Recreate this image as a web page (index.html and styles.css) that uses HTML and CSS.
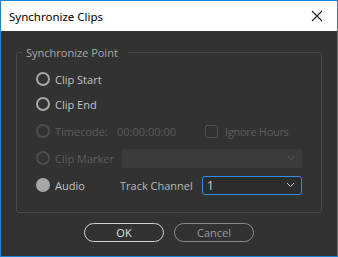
FILE: index.html
```html
<!DOCTYPE html>
<html>
<head>
  <meta charset="utf-8">
  <title>Synchronize Clips</title>
  <link rel="stylesheet" href="styles.css">
</head>
<body>
  <div class="window">
    <div class="titlebar">
      <span class="title">Synchronize Clips</span>
      <svg class="close" width="12" height="12" viewBox="0 0 12 12">
        <path d="M1 1L11 11M11 1L1 11" stroke="#222" stroke-width="1.1"/>
      </svg>
    </div>

    <div class="content">
      <fieldset class="group">
        <legend>Synchronize Point</legend>

        <div class="row">
          <label class="radio"><span class="dot"></span>Clip Start</label>
        </div>
        <div class="row second">
          <label class="radio"><span class="dot"></span>Clip End</label>
        </div>
        <div class="row disabled">
          <label class="radio"><span class="dot"></span>Timecode:</label>
          <span class="timecode">00:00:00:00</span>
          <label class="check"><span class="box"></span>Ignore Hours</label>
        </div>
        <div class="row disabled">
          <label class="radio"><span class="dot"></span>Clip Marker</label>
          <div class="select marker">
            <span></span>
            <svg width="9" height="6" viewBox="0 0 9 6"><path d="M1 1L4.5 4.5L8 1" fill="none" stroke="#555" stroke-width="1"/></svg>
          </div>
        </div>
        <div class="row audio">
          <label class="radio checked"><span class="dot"></span>Audio</label>
          <span class="track-label">Track Channel</span>
          <div class="select track">
            <span>1</span>
            <svg width="9" height="6" viewBox="0 0 9 6"><path d="M1 1L4.5 4.5L8 1" fill="none" stroke="#c8c8c8" stroke-width="1"/></svg>
          </div>
        </div>
      </fieldset>

      <div class="buttons">
        <button class="btn ok">OK</button>
        <button class="btn cancel">Cancel</button>
      </div>
    </div>
  </div>
</body>
</html>
```

FILE: styles.css
```css
html, body {
  margin: 0;
  padding: 0;
}

body {
  width: 338px;
  height: 257px;
  font-family: "Open Sans", "Noto Sans", sans-serif;
  overflow: hidden;
}

.window {
  width: 338px;
  height: 257px;
  box-sizing: border-box;
  border: 1px solid #1883d7;
  background: #323232;
  display: flex;
  flex-direction: column;
}

.titlebar {
  height: 30px;
  background: #fff;
  display: flex;
  align-items: center;
  justify-content: space-between;
  padding: 0 14px 0 8px;
}

.title {
  font-family: "Noto Sans", sans-serif;
  font-size: 11.5px;
  color: #000;
}

.close {
  display: block;
}

.content {
  flex: 1;
  padding: 0 15px;
}

.group {
  margin: 14px 0 0 0;
  padding: 7px 0 0 19px;
  height: 168px;
  box-sizing: border-box;
  border: 1px solid #4a4a4a;
  border-radius: 3px;
}

legend {
  font-size: 11px;
  color: #a8a8a8;
  padding: 0 10px 0 4px;
  margin-left: -14px;
}

.row {
  display: flex;
  align-items: center;
  height: 24px;
  font-size: 11px;
  color: #c4c4c4;
}

.row.second {
  margin-top: 1px;
}

.row.disabled {
  color: #5c5c5c;
  margin-top: 3px;
}

.row.audio {
  margin-top: 3px;
}

.radio, .check {
  display: flex;
  align-items: center;
}

.dot {
  width: 10px;
  height: 10px;
  border: 2px solid #a6a6a6;
  border-radius: 50%;
  margin-right: 5px;
}

.disabled .dot {
  border-color: #4c4c4c;
}

.radio.checked .dot {
  background: #a6a6a6;
}

.radio {
  width: 80px;
}

.timecode {
  margin-left: 1px;
  color: #5a5a5a;
  width: 88px;
}

.check {
  letter-spacing: -0.3px;
}

.box {
  width: 11px;
  height: 11px;
  border: 1px solid #505050;
  border-radius: 2px;
  margin-right: 7px;
}

.select {
  display: flex;
  align-items: center;
  justify-content: space-between;
  height: 19px;
  box-sizing: border-box;
  border-radius: 3px;
  padding: 0 6px 0 4px;
}

.select.marker {
  margin-left: 6px;
  width: 180px;
  background: #3a3a3a;
}

.track-label {
  margin-left: 4px;
  width: 82px;
  color: #b8b8b8;
}

.select.track {
  width: 100px;
  border: 1px solid #2d8ceb;
  background: #2c2c2c;
  color: #d0d0d0;
  font-size: 12px;
}

.buttons {
  display: flex;
  justify-content: center;
  gap: 10px;
  margin-top: 10px;
}

.btn {
  width: 80px;
  height: 19px;
  border-radius: 10px;
  background: transparent;
  font-family: "Open Sans", "Noto Sans", sans-serif;
  font-size: 11px;
  padding: 0;
}

.btn.ok {
  border: 1px solid #d0d0d0;
  color: #e0e0e0;
}

.btn.cancel {
  border: 1px solid #8a8a8a;
  color: #9a9a9a;
}
```
